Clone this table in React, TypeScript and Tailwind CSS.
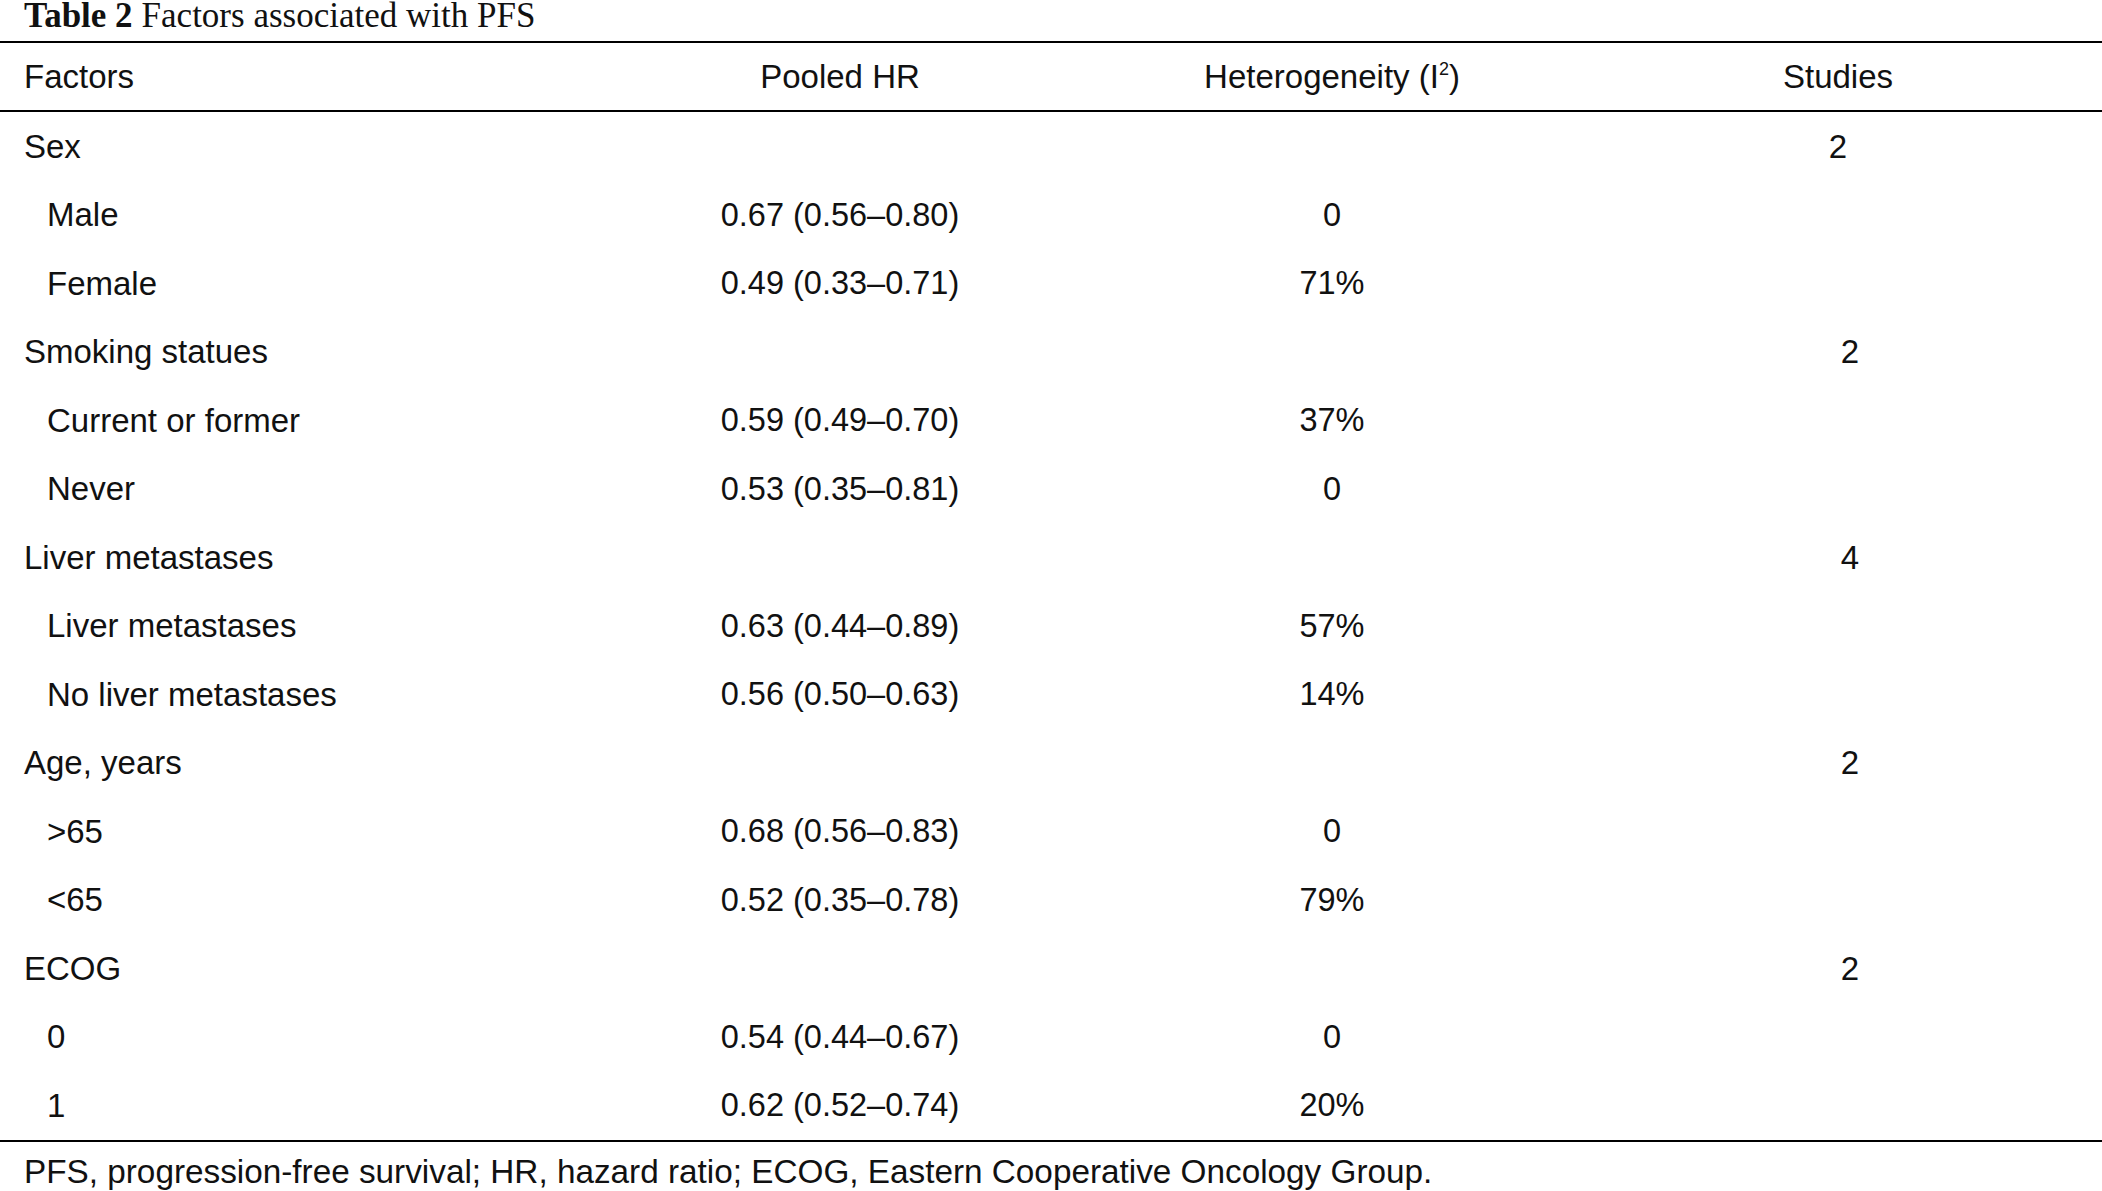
import React from 'react';

type Row = {
  label: string;
  sub?: boolean;
  hr?: string;
  het?: string;
  studies?: string;
  shift?: boolean;
};

const rows: Row[] = [
  { label: 'Sex', studies: '2' },
  { label: 'Male', sub: true, hr: '0.67 (0.56–0.80)', het: '0' },
  { label: 'Female', sub: true, hr: '0.49 (0.33–0.71)', het: '71%' },
  { label: 'Smoking statues', studies: '2', shift: true },
  { label: 'Current or former', sub: true, hr: '0.59 (0.49–0.70)', het: '37%' },
  { label: 'Never', sub: true, hr: '0.53 (0.35–0.81)', het: '0' },
  { label: 'Liver metastases', studies: '4', shift: true },
  { label: 'Liver metastases', sub: true, hr: '0.63 (0.44–0.89)', het: '57%' },
  { label: 'No liver metastases', sub: true, hr: '0.56 (0.50–0.63)', het: '14%' },
  { label: 'Age, years', studies: '2', shift: true },
  { label: '>65', sub: true, hr: '0.68 (0.56–0.83)', het: '0' },
  { label: '<65', sub: true, hr: '0.52 (0.35–0.78)', het: '79%' },
  { label: 'ECOG', studies: '2', shift: true },
  { label: '0', sub: true, hr: '0.54 (0.44–0.67)', het: '0' },
  { label: '1', sub: true, hr: '0.62 (0.52–0.74)', het: '20%' },
];

const grid = 'grid grid-cols-[600px_480px_504px_508px]';

export default function App() {
  return (
    <div className="w-[2102px] h-[1191px] bg-white text-[#111] overflow-hidden font-['Liberation_Sans',Arial,sans-serif]">
      {/* Caption */}
      <div className="h-[41px] pl-[24px] font-['Liberation_Serif','Times_New_Roman',serif] text-[35px] leading-[31px]">
        <span className="font-bold">Table 2</span>
        <span className="ml-[9px]">Factors associated with PFS</span>
      </div>
      <div className="h-[2px] bg-black" />

      {/* Header */}
      <div className={`${grid} h-[67px] items-center text-[33px] leading-none`}>
        <div className="pl-[24px]">Factors</div>
        <div className="text-center">Pooled HR</div>
        <div className="text-center">
          Heterogeneity (I<sup className="text-[18px] relative -top-[13px]">2</sup>)
        </div>
        <div className="text-center">Studies</div>
      </div>
      <div className="h-[2px] bg-black" />

      {/* Body */}
      {rows.map((r, i) => (
        <div key={i} className={`${grid} h-[68.5px] items-center text-[33px] leading-none`}>
          <div className={r.sub ? 'pl-[47px]' : 'pl-[24px]'}>{r.label}</div>
          <div className="text-center text-[32.5px]">{r.hr}</div>
          <div className="text-center text-[32.5px]">{r.het}</div>
          <div className={r.shift ? 'text-center pl-[24px]' : 'text-center'}>{r.studies}</div>
        </div>
      ))}
      <div className="h-[2px] bg-black" />

      {/* Footnote */}
      <div className="h-[48px] pl-[24px] pt-[13px] flex items-center text-[33.3px] leading-none">
        PFS, progression-free survival; HR, hazard ratio; ECOG, Eastern Cooperative Oncology Group.
      </div>
    </div>
  );
}
